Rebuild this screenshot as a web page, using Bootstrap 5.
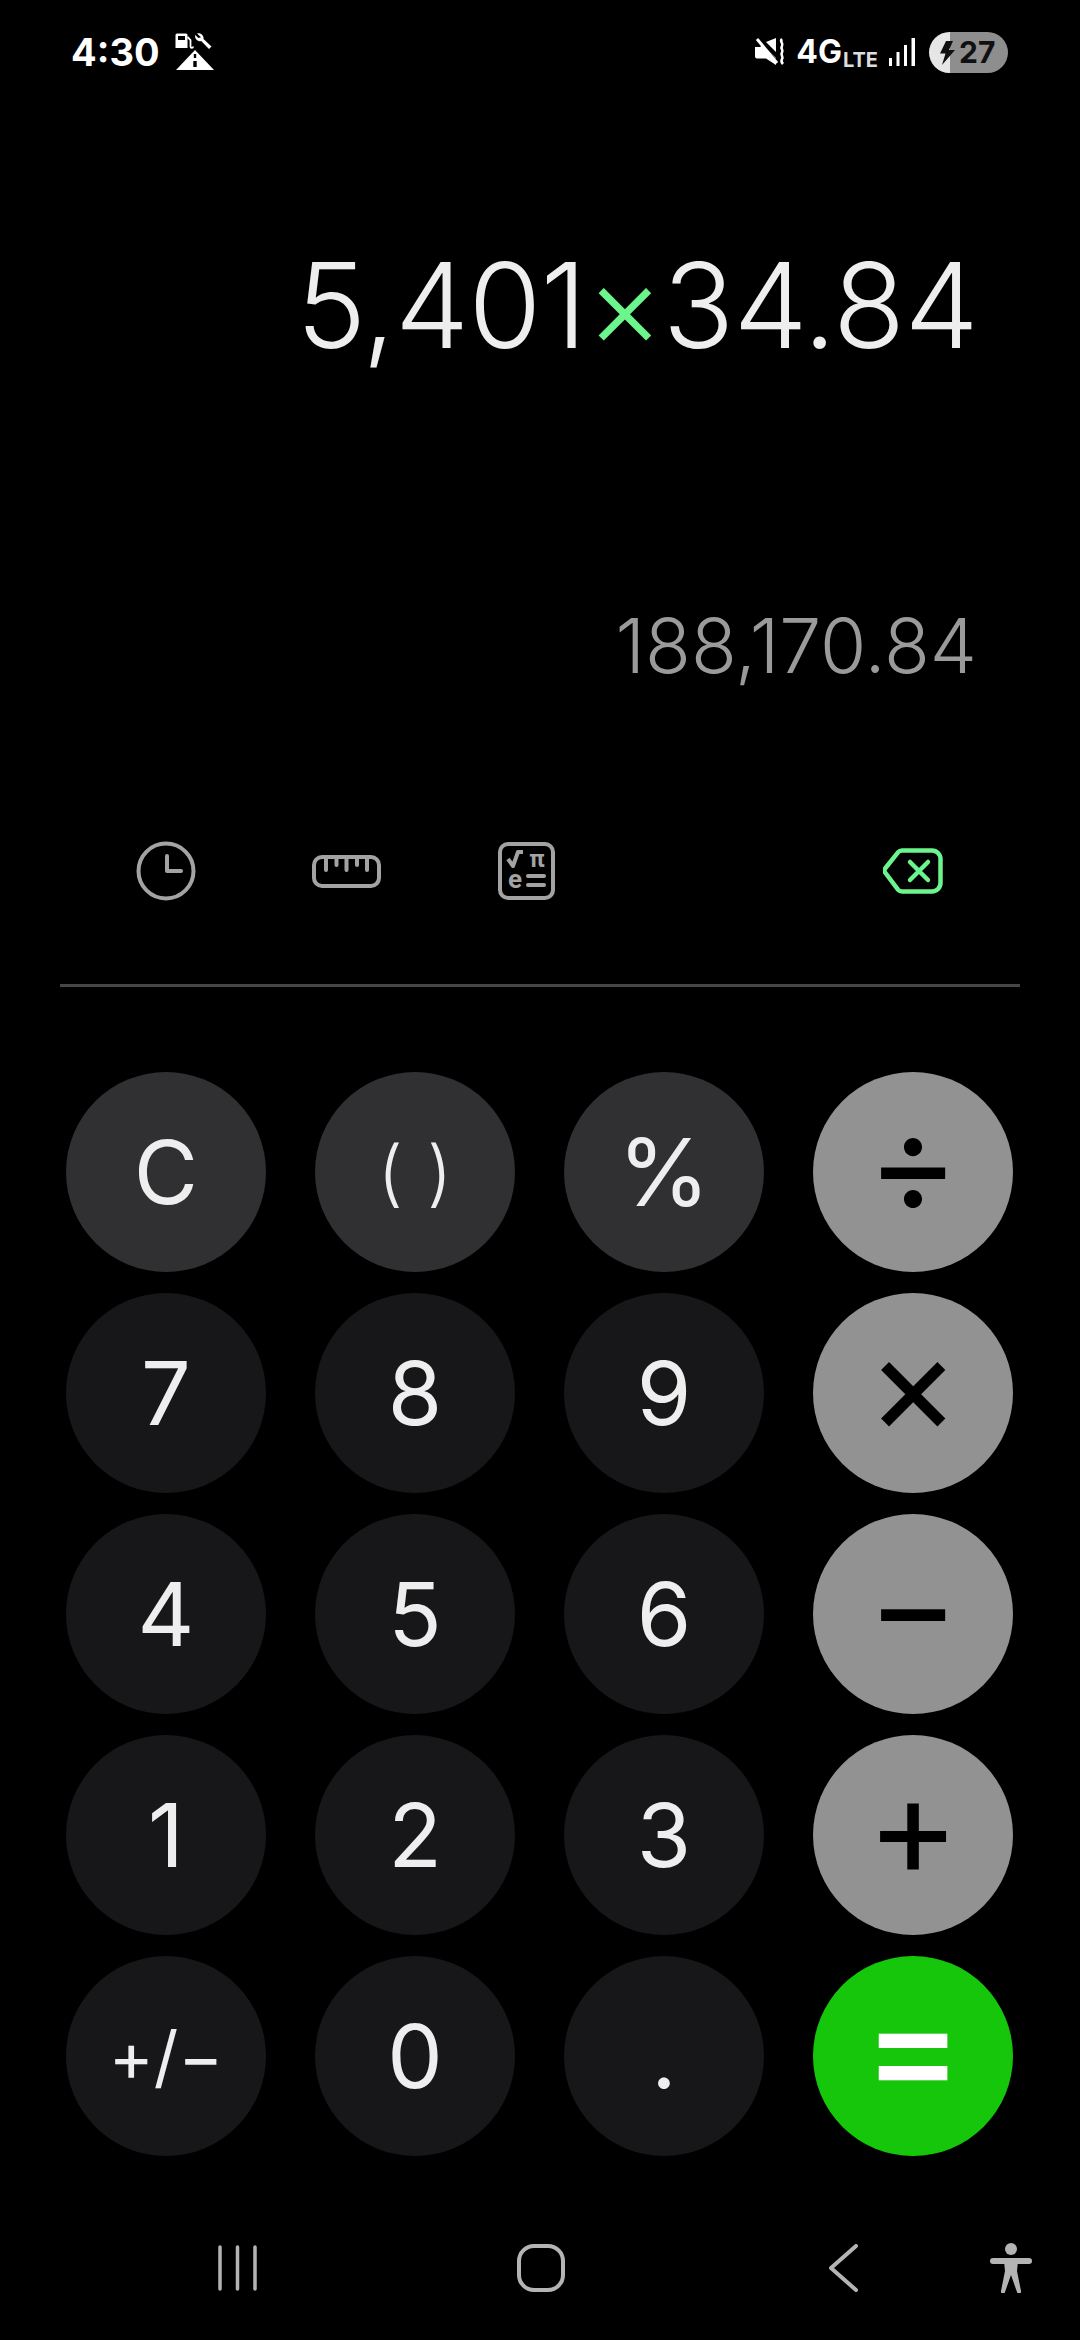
<!DOCTYPE html>
<html lang="en">
<head>
  <title>Calculator</title>
  <meta charset="utf-8">
  <meta name="viewport" content="width=device-width, initial-scale=1">
  <link href="https://cdn.jsdelivr.net/npm/bootstrap@5.3.1/dist/css/bootstrap.min.css" rel="stylesheet">
  <style>
    body {
      width: 1080px;
      height: 2340px;
      overflow: hidden;
      background: #000;
      color: #eee;
      font-family: Inter, "Liberation Sans", sans-serif;
    }

    /* Status bar */
    .status-row {
      height: 104px;
      padding: 0 72px 0 71px;
    }
    .clock-text {
      font-size: 38px;
      font-weight: 700;
      color: #fff;
      line-height: 1;
    }
    .alert-icons { margin-left: 15px; }
    .net-text {
      font-size: 32px;
      font-weight: 700;
      color: #fff;
      line-height: 1;
      margin-left: 11px;
    }
    .lte-text {
      font-size: 20px;
      font-weight: 700;
      color: #ddd;
      line-height: 1;
      margin-left: 1px;
      align-self: flex-end;
      margin-bottom: 3px;
    }
    .signal-icon { margin: 0 14px 0 11px; }
    .batt-pill {
      width: 79px;
      height: 41px;
      border-radius: 21px;
      background: linear-gradient(90deg, #e6e6e6 0 21px, #8e8e8e 21px);
      color: #111;
      font-size: 30px;
      font-weight: 700;
      line-height: 41px;
      padding-left: 30px;
    }

    /* Display */
    .expr-line {
      margin-top: 131px;
      padding-right: 102px;
      font-size: 118px;
      font-weight: 300;
      line-height: 140px;
      letter-spacing: -.7px;
      color: #eee;
      white-space: nowrap;
    }
    .expr-op { color: #6cf58c; }
    .result-line {
      margin-top: 228px;
      padding-right: 103px;
      font-size: 75px;
      font-weight: 300;
      line-height: 86px;
      color: #9a9a9a;
    }

    /* Toolbar */
    .tool-row {
      height: 60px;
      margin-top: 152px;
      padding: 0 137px 0 136px;
    }
    .tool-ruler { margin-left: 116px; }
    .tool-sci { margin-left: 117px; }
    .tool-rule {
      height: 3px;
      margin: 83px 60px 0;
      background: #464646;
    }

    /* Keypad */
    .key-grid {
      display: grid;
      grid-template-columns: repeat(4, 200px);
      grid-auto-rows: 200px;
      column-gap: 49px;
      row-gap: 21px;
      margin-top: 85px;
      padding-left: 66px;
    }
    .key-btn {
      --bs-btn-padding-x: 0;
      --bs-btn-padding-y: 0;
      --bs-btn-border-width: 0;
      --bs-btn-color: #eee;
      --bs-btn-hover-color: #eee;
      --bs-btn-active-color: #eee;
      font-size: 88px;
      font-weight: 400;
      line-height: 1;
      background: #171719;
    }
    .key-btn:hover, .key-btn:active { background: #171719; }
    .key-fn, .key-fn:hover, .key-fn:active { background: #303032; }
    .key-op, .key-op:hover, .key-op:active {
      background: #929292;
      color: #000;
      font-size: 140px;
      font-weight: 400;
      padding-bottom: 20px;
    }
    .key-eq, .key-eq:hover, .key-eq:active {
      background: #16c60a;
      color: #fff;
      font-size: 150px;
      font-weight: 500;
      padding-bottom: 20px;
    }
    .key-small { font-size: 68px; }
    .key-pct { font-size: 94px; }
    .key-paren { font-size: 72px; font-weight: 300; word-spacing: 4px; }

    /* Navigation bar */
    .nav-row {
      margin-top: 87px;
      padding-left: 218px;
    }
    .nav-home { margin-left: 260px; }
    .nav-back { margin-left: 264px; }
    .nav-person { margin-left: 132px; }
  </style>
</head>
<body>

<div class="status-row d-flex align-items-center">
  <span class="clock-text">4:30</span>
  <svg class="alert-icons" width="40" height="40" viewBox="0 0 40 40">
    <path fill="#fff" d="M2 1.5h9a1.5 1.5 0 0 1 1.500 1.500v13h-12v-13a1.500 1.500 0 0 1 1.500-1.500z"/>
    <rect x="3" y="4" width="7" height="4" fill="#000"/>
    <path fill="none" stroke="#fff" stroke-width="1.800" d="M12.500 5l3 3v6.500a1.300 1.300 0 0 0 2.600 0"/>
    <path fill="#fff" d="M22 1.500a5 5 0 0 1 6.500 5.500l8 7.500-2.500 2.500-7.800-8a5 5 0 0 1-6-6l3.200 3 2.600-.8z"/>
    <path fill="#fff" d="M20 18L39 38H1z"/>
    <rect x="18.800" y="22" width="2.400" height="4" fill="#000"/>
    <rect x="18.300" y="29" width="3.400" height="6" fill="#000"/>
  </svg>
  <div class="ms-auto d-flex align-items-center">
    <svg width="30" height="28" viewBox="0 0 30 28">
      <path fill="#fff" d="M0 9h5l3-2 13 13v7l-10-6.500H2a2 2 0 0 1-2-2zM11 4l10-4v14z"/>
      <path stroke="#000" stroke-width="2.500" d="M1 -1l22 26"/>
      <path stroke="#fff" stroke-width="3" d="M2 1l20 24"/>
      <path fill="none" stroke="#fff" stroke-width="2.600" d="M27 1c-3 3 2 4 0 7-2 3 2 4 0 6.500-2 3 2 4 0 6.500-1 2-1 3 1 5"/>
    </svg>
    <span class="net-text">4G</span>
    <span class="lte-text">LTE</span>
    <svg class="signal-icon" width="26" height="28" viewBox="0 0 26 28">
      <path fill="#fff" d="M0 20h3v8H0zM7.500 14h3v14h-3zM15 7h3v21h-3zM22.500 0H26v28h-3.500z"/>
    </svg>
    <div class="batt-pill position-relative">
      27
      <svg class="position-absolute top-0 start-0" width="32" height="41" viewBox="0 0 32 41">
        <path fill="#111" d="M17 9h7l-4 9h6L13 33l3.500-11.500H11z"/>
      </svg>
    </div>
  </div>
</div>

<div class="expr-line text-end">5,401<span class="expr-op">×</span>34.84</div>
<div class="result-line text-end">188,170.84</div>

<div class="tool-row d-flex align-items-center">
  <svg width="60" height="60" viewBox="0 0 60 60" fill="none" stroke="#a3a3a3" stroke-width="4" stroke-linecap="round" stroke-linejoin="round">
    <circle cx="30" cy="30" r="27.500"/>
    <path d="M31 15v15h14"/>
  </svg>
  <svg class="tool-ruler" width="69" height="33" viewBox="0 0 69 33" fill="none" stroke="#a3a3a3" stroke-width="4" stroke-linecap="round" stroke-linejoin="round">
    <rect x="2" y="2" width="65" height="29" rx="8"/>
    <path d="M14 3v12M24.500 3v7M34.500 3v12M45 3v7M55 3v12"/>
  </svg>
  <svg class="tool-sci" width="57" height="58" viewBox="0 0 57 58" fill="none" stroke="#a3a3a3" stroke-width="4" stroke-linejoin="round">
    <rect x="2" y="2" width="53" height="54" rx="8"/>
    <path stroke-width="4" d="M10 17l5 7 5-14h5"/>
    <text x="39" y="25" text-anchor="middle" font-family="Roboto" font-size="24" font-weight="700" fill="#a3a3a3" stroke="none">π</text>
    <text x="17" y="46" text-anchor="middle" font-family="Roboto" font-size="26" font-weight="700" fill="#a3a3a3" stroke="none">e</text>
    <path stroke-width="4" stroke-linecap="round" d="M30 34h16M30 43h16"/>
  </svg>
  <svg class="ms-auto" width="60" height="46" viewBox="0 0 60 46" fill="none" stroke="#6cf58c" stroke-width="4.500" stroke-linecap="round" stroke-linejoin="round">
    <path d="M19 2.500h30a8.500 8.500 0 0 1 8.500 8.500v24a8.500 8.500 0 0 1-8.500 8.500H19a6 6 0 0 1-4-1.800L2.500 25a3.500 3.500 0 0 1 0-5L15 4.300a6 6 0 0 1 4-1.800z"/>
    <path d="M27 14l18 18M45 14L27 32"/>
  </svg>
</div>
<div class="tool-rule"></div>

<div class="key-grid">
  <button class="btn rounded-circle key-btn key-fn" type="button">C</button>
  <button class="btn rounded-circle key-btn key-fn key-paren" type="button">( )</button>
  <button class="btn rounded-circle key-btn key-fn key-pct" type="button">%</button>
  <button class="btn rounded-circle key-btn key-op" type="button">÷</button>

  <button class="btn rounded-circle key-btn" type="button">7</button>
  <button class="btn rounded-circle key-btn" type="button">8</button>
  <button class="btn rounded-circle key-btn" type="button">9</button>
  <button class="btn rounded-circle key-btn key-op" type="button">×</button>

  <button class="btn rounded-circle key-btn" type="button">4</button>
  <button class="btn rounded-circle key-btn" type="button">5</button>
  <button class="btn rounded-circle key-btn" type="button">6</button>
  <button class="btn rounded-circle key-btn key-op" type="button">−</button>

  <button class="btn rounded-circle key-btn" type="button">1</button>
  <button class="btn rounded-circle key-btn" type="button">2</button>
  <button class="btn rounded-circle key-btn" type="button">3</button>
  <button class="btn rounded-circle key-btn key-op" type="button">+</button>

  <button class="btn rounded-circle key-btn key-small" type="button">+/−</button>
  <button class="btn rounded-circle key-btn" type="button">0</button>
  <button class="btn rounded-circle key-btn" type="button">.</button>
  <button class="btn rounded-circle key-btn key-eq" type="button">=</button>
</div>

<div class="nav-row d-flex align-items-center">
  <svg width="39" height="46" viewBox="0 0 39 46" stroke="#b4b4b4" stroke-width="3.500" stroke-linecap="round">
    <path d="M2 2v42M19.500 2v42M37 2v42"/>
  </svg>
  <svg class="nav-home" width="48" height="48" viewBox="0 0 48 48" fill="none" stroke="#b4b4b4" stroke-width="4">
    <rect x="2" y="2" width="44" height="44" rx="15"/>
  </svg>
  <svg class="nav-back" width="29" height="48" viewBox="0 0 29 48" fill="none" stroke="#b4b4b4" stroke-width="4" stroke-linecap="round" stroke-linejoin="round">
    <path d="M27 2L2 24l25 22"/>
  </svg>
  <svg class="nav-person" width="42" height="50" viewBox="0 0 42 50" fill="#b4b4b4">
    <ellipse cx="21" cy="6" rx="6" ry="6"/>
    <rect x="0" y="15" width="42" height="6" rx="3"/>
    <path d="M14 18h14l-1 10 4 20a2 2 0 0 1-4 1l-6-17-6 17a2 2 0 0 1-4-1l4-20z"/>
  </svg>
</div>

<script src="https://cdn.jsdelivr.net/npm/bootstrap@5.3.1/dist/js/bootstrap.bundle.min.js"></script>
</body>
</html>
